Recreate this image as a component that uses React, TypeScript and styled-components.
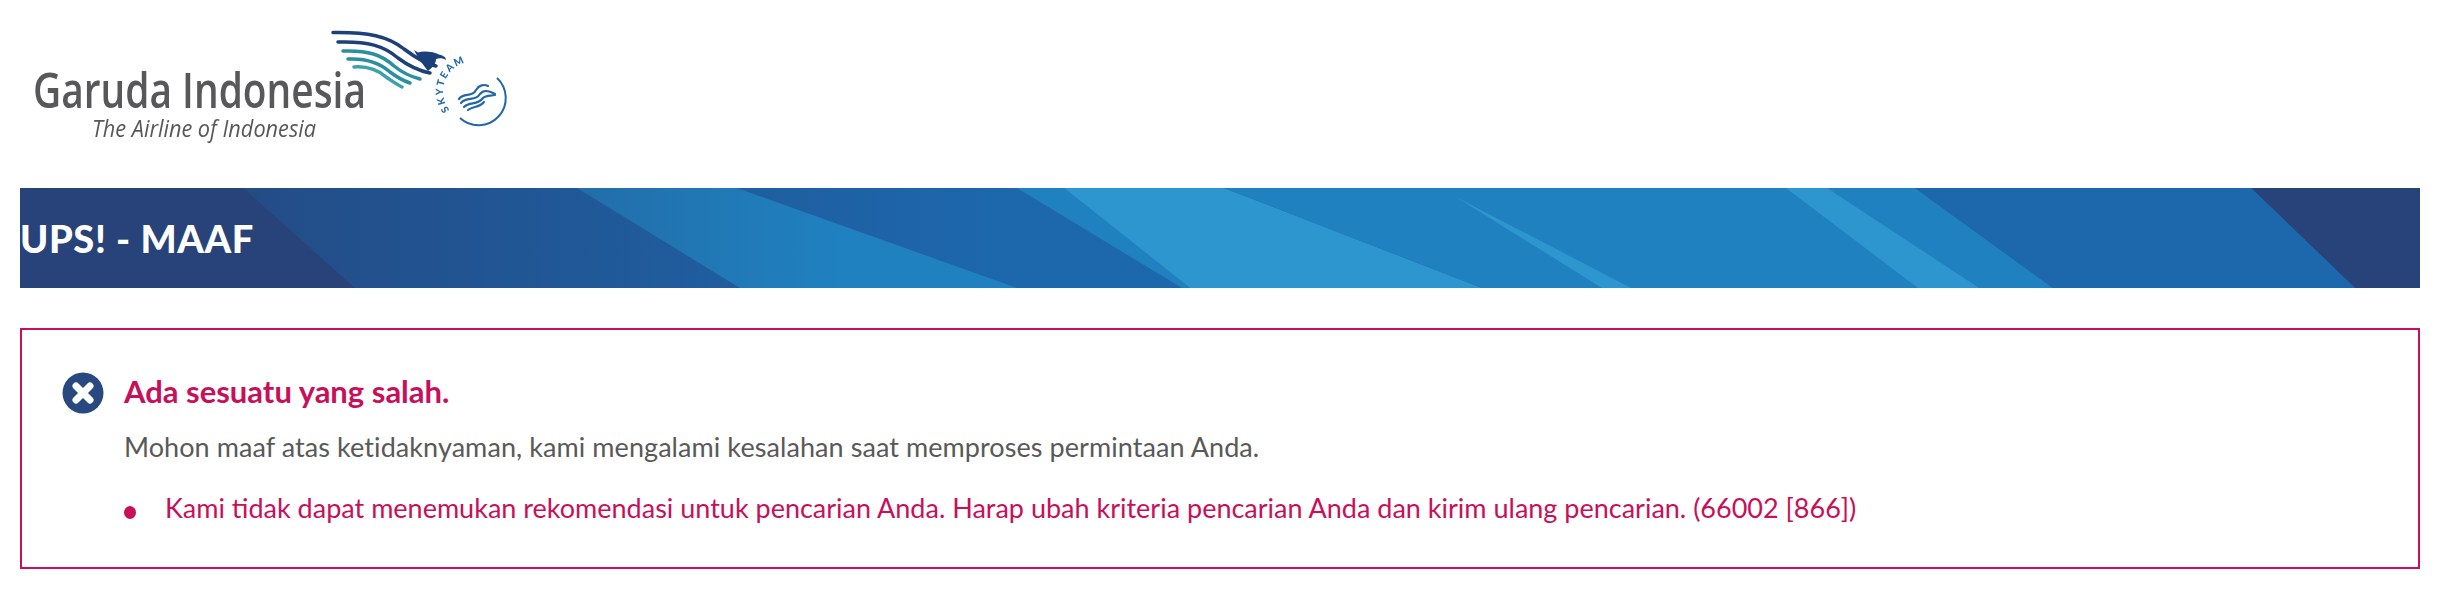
import React from "react";
import styled, { createGlobalStyle } from "styled-components";

const Global = createGlobalStyle`
  html, body { margin: 0; padding: 0; background: #fff; }
  body { font-family: "Lato", "Open Sans", sans-serif; }
`;

const Page = styled.div`
  padding: 0 20px;
  width: 2400px;
`;

const Header = styled.header`
  height: 188px;
  display: flex;
  align-items: flex-start;
  margin-left: -20px;
`;

const LogoSvg = styled.svg`
  display: block;
`;

const Banner = styled.div`
  position: relative;
  height: 100px;
  display: flex;
  align-items: center;
  overflow: hidden;
  background: #27437a;
`;

const BannerArt = styled.svg`
  position: absolute;
  inset: 0;
  width: 100%;
  height: 100%;
`;

const BannerTitle = styled.h1`
  position: relative;
  margin: 0;
  color: #fff;
  font-family: "Lato", sans-serif;
  font-weight: 900;
  font-size: 38px;
  line-height: 100px;
  letter-spacing: 0.6px;
`;

const ErrorBox = styled.section`
  box-sizing: border-box;
  margin-top: 40px;
  height: 241px;
  border: 2px solid #c8105a;
  padding: 42px 40px 0 40px;
  display: grid;
  grid-template-columns: 42px 1fr;
  column-gap: 20px;
  align-content: start;
`;

const IconWrap = styled.div`
  width: 42px;
  height: 42px;
`;

const Content = styled.div`
  display: flex;
  flex-direction: column;
`;

const Heading = styled.h2`
  margin: 0;
  color: #c8105a;
  font-family: "Lato", sans-serif;
  font-weight: 700;
  font-size: 31px;
  line-height: 38px;
`;

const Message = styled.p`
  margin: 19px 0 0;
  color: #595959;
  font-size: 27px;
  line-height: 36px;
  letter-spacing: 0.07px;
`;

const Reasons = styled.ul`
  margin: 25px 0 0;
  padding: 0;
  list-style: none;
`;

const Reason = styled.li`
  display: flex;
  align-items: center;
  gap: 29px;
  color: #c8105a;
  font-size: 27px;
  line-height: 36px;
`;

const Bullet = styled.span`
  flex: none;
  width: 12px;
  height: 13px;
  margin-top: 9px;
  border-radius: 50%;
  background: #c8105a;
`;

const GarudaLogo = () => (
  <LogoSvg width="520" height="188" viewBox="0 0 520 188">
    <defs>
      <filter id="soft" x="-5%" y="-5%" width="110%" height="110%">
        <feGaussianBlur stdDeviation="0.55" />
      </filter>
    </defs>
    <g filter="url(#soft)">
      <text x="33" y="108" fontFamily="'Open Sans', sans-serif" fontWeight="600" fontSize="48" fill="#58585a" textLength="333" lengthAdjust="spacingAndGlyphs">
        Garuda Indonesia
      </text>
      <text x="92" y="137" fontFamily="'Open Sans', sans-serif" fontStyle="italic" fontSize="24" fill="#58585a" textLength="224" lengthAdjust="spacingAndGlyphs">
        The Airline of Indonesia
      </text>
      <g fill="none" strokeLinecap="round">
        <path d="M333 32.5C368 32 388 36 404 49C416 58 426 64 436 66" stroke="#1c3f78" strokeWidth="3.5" />
        <path d="M338 42C368 41 384 46 398 58C410 67 420 71 430 73" stroke="#1c3f78" strokeWidth="3.5" />
        <path d="M343 51C368 50 382 55 394 66C404 74 412 77 420 79" stroke="#2a8f9f" strokeWidth="3.5" />
        <path d="M348 59C368 58 380 63 390 72C398 78 404 81 410 83" stroke="#2a8f9f" strokeWidth="3.5" />
        <path d="M354 67C368 66 378 70 386 77C392 81 396 84 402 87" stroke="#3aa2ab" strokeWidth="3.5" />
      </g>
      <path d="M414 50L418 52.5C424 50.5 434 52 439 54.5C443 55.5 446 57 446 60C443 58 439 58 436 59C436 64 432 68 428 71C424 66 418 58 414 50Z" fill="#1c3f78" />
      <path d="M497 78A27 27 0 1 1 460 118" fill="none" stroke="#2467a8" strokeWidth="2" />
      <path id="skyArc" d="M449.5 110A30 30 0 0 1 497 73" fill="none" />
      <text fontFamily="'Lato', sans-serif" fontWeight="900" fontSize="10" fill="#2467a8" letterSpacing="1.8">
        <textPath href="#skyArc">SKYTEAM</textPath>
      </text>
      <g fill="none" stroke="#2467a8" strokeWidth="2.2" strokeLinecap="round">
        <path d="M459 99C464 92 472 98 476 90C479 85 484 84 488 86" />
        <path d="M461 103C467 96 475 102 480 94C483 90 488 90 495 94" />
        <path d="M464 107C470 101 477 106 483 98C486 95 490 96 495 95" />
        <path d="M468 110C473 106 479 108 484 102" />
      </g>
    </g>
  </LogoSvg>
);

const ErrorIcon = () => (
  <svg width="42" height="42" viewBox="0 0 42 42">
    <circle cx="21" cy="21" r="20.5" fill="#27497f" />
    <path d="M14 14L28 28M28 14L14 28" stroke="#fff" strokeWidth="7" strokeLinecap="round" />
  </svg>
);

const BannerFacets = () => (
  <BannerArt viewBox="20 0 2400 100" preserveAspectRatio="none">
    <defs>
      <linearGradient id="base" x1="243" x2="1000" y1="0" y2="0" gradientUnits="userSpaceOnUse">
        <stop offset="0" stopColor="#234c86" />
        <stop offset="1" stopColor="#1d67ad" />
      </linearGradient>
      <linearGradient id="facet" x1="577" x2="1017" y1="0" y2="0" gradientUnits="userSpaceOnUse">
        <stop offset="0" stopColor="#216ea9" />
        <stop offset="0.6" stopColor="#2081c0" />
      </linearGradient>
    </defs>
    <polygon points="243,0 2251,0 2355,100 355,100" fill="url(#base)" />
    <polygon points="577,0 737,0 1017,100 740,100" fill="url(#facet)" />
    <polygon points="1017,0 1064,0 1190,100 1182,100" fill="#2081c0" />
    <polygon points="1064,0 1224,0 1482,100 1190,100" fill="#2e96cf" />
    <polygon points="1224,0 1915,0 2053,100 1482,100" fill="#2081c0" />
    <polygon points="1456,9 1631,100 1602,100" fill="#2e96cf" />
    <polygon points="1786,0 1827,0 1979,100 1918,100" fill="#2e96cf" />
    <polygon points="1915,0 2251,0 2355,100 2053,100" fill="#1d67ad" />
  </BannerArt>
);

export default function App() {
  return (
    <Page>
      <Global />
      <Header>
        <GarudaLogo />
      </Header>
      <Banner>
        <BannerFacets />
        <BannerTitle>UPS! - MAAF</BannerTitle>
      </Banner>
      <ErrorBox>
        <IconWrap>
          <ErrorIcon />
        </IconWrap>
        <Content>
          <Heading>Ada sesuatu yang salah.</Heading>
          <Message>Mohon maaf atas ketidaknyaman, kami mengalami kesalahan saat memproses permintaan Anda.</Message>
          <Reasons>
            <Reason>
              <Bullet />
              Kami tidak dapat menemukan rekomendasi untuk pencarian Anda. Harap ubah kriteria pencarian Anda dan kirim ulang pencarian. (66002 [866])
            </Reason>
          </Reasons>
        </Content>
      </ErrorBox>
    </Page>
  );
}
